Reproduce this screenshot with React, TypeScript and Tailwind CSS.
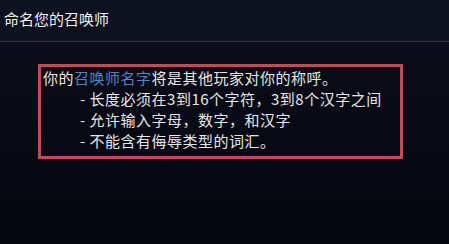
export default function App() {
    return (
        <main className="w-[449px] h-[244px] overflow-hidden bg-gradient-to-b from-[#0c0f1c] to-[#05070e] text-[#e6e6e6] font-['Noto_Sans_CJK_SC','Noto_Sans',sans-serif]">
            {/* Header */}
            <header className="h-[42px] bg-[#0e111f] border-b border-[#2c3545] flex items-center pl-[4px] pb-[2px]">
                <h1 className="text-[15px] text-[#f0f0f0]">命名您的召唤师</h1>
            </header>

            {/* Rules box */}
            <section className="ml-[38px] mt-[22px] w-[365px] h-[95px] border-[3px] border-[#c44a55] pl-[2px] text-[15px] tracking-[0.5px] leading-[21px]">
                <p>
                    你的<span className="text-[#4f86c6]">召唤师名字</span>将是其他玩家对你的称呼。
                </p>
                <ul className="pl-[37px]">
                    <li>- 长度必须在3到16个字符，3到8个汉字之间</li>
                    <li>- 允许输入字母，数字，和汉字</li>
                    <li>- 不能含有侮辱类型的词汇。</li>
                </ul>
            </section>
        </main>
    );
}
